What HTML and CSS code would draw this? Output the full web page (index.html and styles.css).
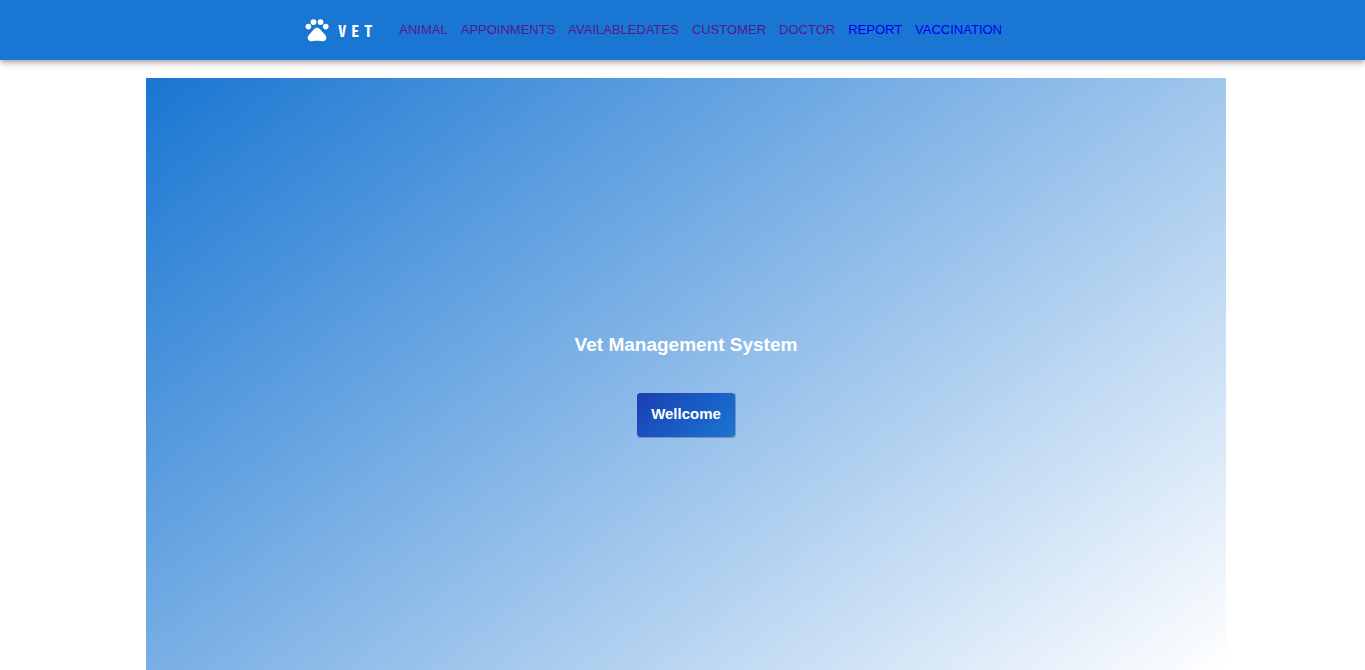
FILE: index.html
```html
<!DOCTYPE html>
<html lang="en">
<head>
<meta charset="utf-8">
<title>Vet Management System</title>
<link rel="stylesheet" href="styles.css">
</head>
<body>
<header class="navbar">
  <div class="navbar-inner">
    <a class="brand" href="#home">
      <svg class="brand-icon" viewBox="0 0 24 24" aria-hidden="true">
        <circle cx="4.6" cy="9.1" r="2.4"/>
        <circle cx="9" cy="5.2" r="2.5"/>
        <circle cx="15" cy="5.2" r="2.5"/>
        <circle cx="19.5" cy="9.1" r="2.4"/>
        <path d="M17.34 14.46c-.87-1.02-1.6-1.89-2.48-2.91-.46-.54-1.05-1.08-1.75-1.32-.11-.04-.22-.07-.33-.09-.25-.04-.52-.04-.78-.04s-.53 0-.79.05c-.11.02-.22.05-.33.09-.7.24-1.28.78-1.75 1.32-.87 1.02-1.6 1.89-2.48 2.91-1.31 1.31-2.92 2.76-2.62 4.79.29 1.02 1.02 2.03 2.33 2.32.73.15 3.06-.44 5.54-.44h.18c2.48 0 4.81.58 5.54.44 1.31-.29 2.04-1.31 2.33-2.32.31-2.04-1.3-3.49-2.61-4.8z"/>
      </svg>
      <span class="brand-name">VET</span>
    </a>
    <nav class="links">
      <a class="link visited" href="#animal">ANIMAL</a>
      <a class="link visited" href="#appoinments">APPOINMENTS</a>
      <a class="link visited" href="#availabledates">AVAILABLEDATES</a>
      <a class="link visited" href="#customer">CUSTOMER</a>
      <a class="link visited" href="#doctor">DOCTOR</a>
      <a class="link" href="#report">REPORT</a>
      <a class="link" href="#vaccination">VACCINATION</a>
    </nav>
  </div>
</header>
<div class="page">
  <main class="hero">
    <h1 class="hero-title">Vet Management System</h1>
    <button class="hero-button" type="button">Wellcome</button>
  </main>
</div>
</body>
</html>
```
FILE: styles.css
```css
* {
  box-sizing: border-box;
}

body {
  margin: 0;
  min-height: 100vh;
  display: flex;
  flex-direction: column;
  font-family: "Liberation Sans", Arial, sans-serif;
  background: #fff;
}

.navbar {
  height: 60px;
  background: #1976d2;
  box-shadow: 0 2px 4px -1px rgba(0, 0, 0, 0.2), 0 4px 5px rgba(0, 0, 0, 0.14), 0 1px 10px rgba(0, 0, 0, 0.12);
}

.navbar-inner {
  width: 56%;
  height: 100%;
  margin: 0 auto;
  padding-left: 3px;
  display: flex;
  align-items: center;
}

.brand {
  display: flex;
  align-items: center;
  gap: 7px;
  margin-right: 22px;
  color: #fff;
  text-decoration: none;
}

.brand-icon {
  width: 28px;
  height: 28px;
  fill: currentColor;
}

.brand-name {
  font-family: "Noto Sans Mono CJK SC", "Noto Sans Mono CJK JP", "Liberation Mono", monospace;
  font-size: 16px;
  line-height: 24px;
  font-weight: 700;
  letter-spacing: 5px;
}

.links {
  display: flex;
  gap: 13px;
}

.link {
  font-size: 13px;
  line-height: 20px;
  color: #0000ee;
  text-decoration: none;
}

.link.visited {
  color: #551a8b;
}

.page {
  flex: 1;
  display: flex;
  justify-content: center;
  padding: 18px 0 0 7px;
}

.hero {
  width: 1080px;
  max-width: 100%;
  padding-top: 24px;
  display: flex;
  flex-direction: column;
  align-items: center;
  justify-content: center;
  gap: 36px;
  background: linear-gradient(142deg, #1976d2, #fff);
}

.hero-title {
  margin: 0;
  font-size: 19px;
  line-height: 22px;
  font-weight: 700;
  color: #fff;
}

.hero-button {
  padding: 11px 14px 13px;
  border: 1px solid;
  border-color: #9db4dc #7f8fb5 #7f8fb5 #9db4dc;
  border-radius: 4px;
  font: 700 15px/20px "Liberation Sans", Arial, sans-serif;
  color: #fff;
  background: linear-gradient(135deg, #1a3fb3, #1976d2) padding-box;
}
```
